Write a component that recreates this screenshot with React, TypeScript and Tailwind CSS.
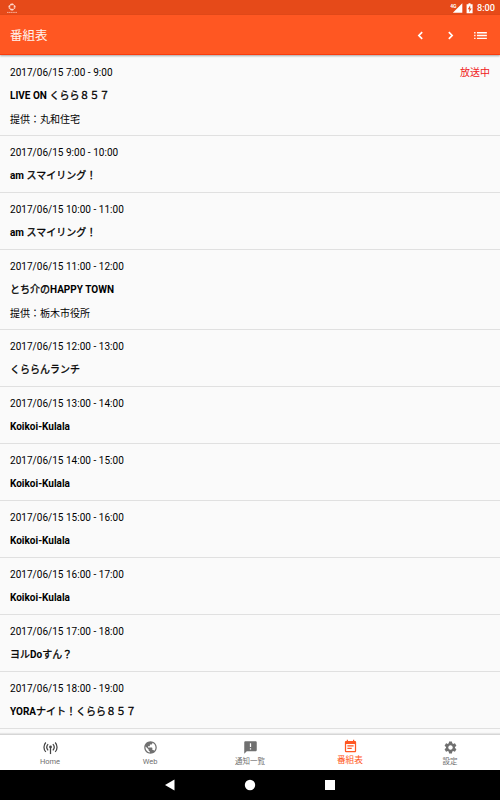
import React from 'react';
import { MdList, MdPublic, MdAnnouncement, MdEventNote, MdSettings } from 'react-icons/md';

type Program = { time: string; title: string; sponsor?: string; live?: boolean };

const programs: Program[] = [
  { time: '7:00 - 9:00', title: 'LIVE ON くらら８５７', sponsor: '提供：丸和住宅', live: true },
  { time: '9:00 - 10:00', title: 'am スマイリング！' },
  { time: '10:00 - 11:00', title: 'am スマイリング！' },
  { time: '11:00 - 12:00', title: 'とち介のHAPPY TOWN', sponsor: '提供：栃木市役所' },
  { time: '12:00 - 13:00', title: 'くららんランチ' },
  { time: '13:00 - 14:00', title: 'Koikoi-Kulala' },
  { time: '14:00 - 15:00', title: 'Koikoi-Kulala' },
  { time: '15:00 - 16:00', title: 'Koikoi-Kulala' },
  { time: '16:00 - 17:00', title: 'Koikoi-Kulala' },
  { time: '17:00 - 18:00', title: 'ヨルDoすん？' },
  { time: '18:00 - 19:00', title: 'YORAナイト！くらら８５７' },
];

function StatusBar() {
  return (
    <div className="flex h-[15px] shrink-0 items-center bg-[#e64a19] pr-[5px] pl-[6px] text-white">
      <svg width="12" height="12" viewBox="0 0 12 12" fill="none" stroke="#ffd9cc">
        <path d="M4.400 3.200 6 1.600l1.600 1.600M4.400 6.800 6 8.400l1.600-1.600M4.100 3.500 2.600 5l1.500 1.500M7.900 3.500 9.400 5 7.900 6.500" strokeWidth="1.600" strokeDasharray="1.900 .5 1.900 9" />
        <path d="M1 10.400h10" strokeWidth=".8" strokeDasharray="1.500 .3" opacity=".85" />
      </svg>
      <div className="flex-1" />
      <svg width="13" height="12" viewBox="0 0 13 12" fill="#fff">
        <path d="M12.300 1.300v9.500H2.800z" />
        <path d="M0 0h6.500v5.500H0z" fill="#e64a19" />
        <text x="0.200" y="5.500" fontSize="5" fontWeight="700" fontFamily="Roboto, sans-serif">4G</text>
      </svg>
      <svg className="ml-[3px]" width="8" height="12" viewBox="0 0 8 12">
        <path d="M2.500 1.300h2v.9H6.600v9H.6V2.200h1.900z" fill="#fff" />
        <path d="M4.200 3.300 1.800 7.200h1.500v3.100l2.300-3.900H4.200z" fill="#e64a19" />
      </svg>
      <span className="ml-[3px] pt-px text-[9.200px] font-medium leading-[14px]">8:00</span>
    </div>
  );
}

function Chevron({ d }: { d: string }) {
  return (
    <svg width="15" height="15" viewBox="0 0 24 24" fill="none" stroke="currentColor" strokeWidth="2.700">
      <path d={d} />
    </svg>
  );
}

function Toolbar() {
  return (
    <header className="relative z-10 flex h-10 shrink-0 items-center border-b border-[#fa3c0c] bg-[#ff5722] pt-px pr-[12px] pl-[10px] text-white shadow-[0_1px_2px_rgba(0,0,0,0.35)]">
      <h1 className="flex-1 pt-[2px] text-[12.500px] text-[#fff3ee]">番組表</h1>
      <div className="flex items-center gap-[15px]">
        <Chevron d="M14.700 6.700 9.400 12l5.300 5.300" />
        <Chevron d="M9.300 6.700 14.600 12l-5.300 5.300" />
        <MdList size={17} className="-mx-px" />
      </div>
    </header>
  );
}

// Japanese runs get a lighter emboldening than the Latin ones.
function Title({ text }: { text: string }) {
  const runs = text.split(/([\u3000-\u9fff\uff00-\uffef]+)/);
  return (
    <div className="font-bold">
      {runs.map((run, i) =>
        i % 2 ? (
          <span key={i} className="font-normal [-webkit-text-stroke:0.3px_#000]">
            {run}
          </span>
        ) : (
          run
        ),
      )}
    </div>
  );
}

function ProgramRow({ time, title, sponsor, live }: Program) {
  return (
    <li className="border-b border-[#e0e0e0] px-[10px] pt-[5px] pb-1 text-[10px] leading-[23px]">
      <div className="flex justify-between">
        <span className="tracking-[0.025px]">2017/06/15 {time}</span>
        {live && <span className="text-[#f02020]">放送中</span>}
      </div>
      <div className="pb-px">
        <Title text={title} />
      </div>
      {sponsor && <div>{sponsor}</div>}
    </li>
  );
}

function AntennaIcon() {
  return (
    <svg width="15" height="15" viewBox="0 0 24 24" fill="none" stroke="#444" strokeWidth="2">
      <path d="M4.500 4a11 11 0 0 0 0 15M19.500 4a11 11 0 0 1 0 15M8.200 6.500a7.500 7.500 0 0 0 0 10M15.800 6.500a7.500 7.500 0 0 1 0 10" />
      <circle cx="12" cy="11" r="2.200" fill="#444" stroke="none" />
      <path d="M12 12v10.500" strokeWidth="2" />
    </svg>
  );
}

const tabs = [
  { label: 'Home', icon: <AntennaIcon /> },
  { label: 'Web', icon: <MdPublic size={15} /> },
  { label: '通知一覧', icon: <MdAnnouncement size={15} /> },
  { label: '番組表', icon: <MdEventNote size={15} />, active: true },
  { label: '設定', icon: <MdSettings size={15} /> },
];

function BottomTabs() {
  return (
    <nav className="grid h-[36px] shrink-0 grid-cols-5 border-t border-[#d6d6d6] bg-white shadow-[0_-1px_1px_rgba(0,0,0,0.08)]">
      {tabs.map((t) => (
        <div
          key={t.label}
          className={
            t.active
              ? 'flex flex-col items-center pt-[4px] text-[8.750px] leading-[12px] text-[#ff5722]'
              : 'flex flex-col items-center pt-[5px] text-[7.500px] leading-[13px] text-[#707070]'
          }
        >
          {t.icon}
          <span>{t.label}</span>
        </div>
      ))}
    </nav>
  );
}

function SystemBar() {
  return (
    <div className="flex h-[30px] shrink-0 items-center justify-center bg-black">
      <svg width="180" height="16" viewBox="0 0 180 16" fill="#fff">
        <path d="M14.500 2.500v11L5 8z" />
        <circle cx="90" cy="8" r="5.200" />
        <path d="M165 3h10v10h-10z" />
      </svg>
    </div>
  );
}

export default function App() {
  return (
    <div className="flex h-[800px] w-[500px] flex-col overflow-hidden bg-[#fafafa] font-['Roboto','Noto_Sans_CJK_JP',sans-serif] text-black">
      <StatusBar />
      <Toolbar />
      <ul className="min-h-0 flex-1 overflow-hidden pt-px">
        {programs.map((p) => (
          <ProgramRow key={p.time} {...p} />
        ))}
      </ul>
      <BottomTabs />
      <SystemBar />
    </div>
  );
}
